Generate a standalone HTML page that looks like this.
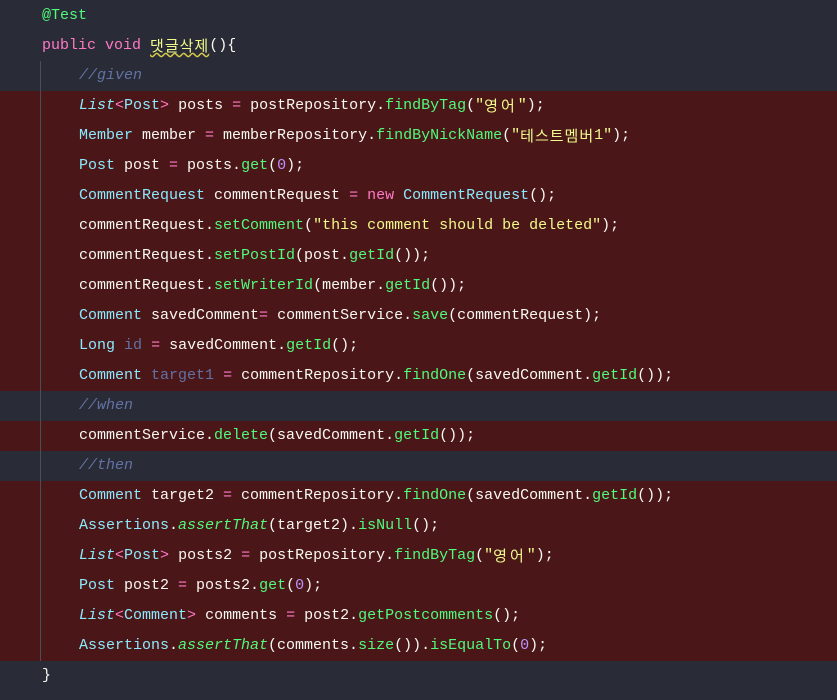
<!DOCTYPE html>
<html><head><meta charset="utf-8"><style>
body{margin:0;background:#292b37;width:837px;height:700px;overflow:hidden;position:relative;font-family:"Liberation Mono","Noto Sans CJK KR",monospace;font-size:15px;color:#f8f8f2}
.band{position:absolute;left:0;width:837px;background:#4a1618}
.guide{position:absolute;left:40px;top:61px;height:600px;width:1px;background:#4b4d5a}
.l{position:absolute;height:30px;line-height:30px;white-space:pre;overflow:visible}
.k{font-family:"Noto Sans CJK KR",sans-serif;letter-spacing:1px;display:inline-block;line-height:15px;vertical-align:-2px}
.k3{letter-spacing:3px}
.kw{color:#ff79c6}.t{color:#8be9fd}.ti{color:#8be9fd;font-style:italic}.m{color:#50fa7b}.mi{color:#50fa7b;font-style:italic}
.s{color:#f1fa8c}.c{color:#6272a4;font-style:italic}.n{color:#bd93f9}.u{color:#6272a4}.a{color:#50fa7b}.op{color:#ff79c6}
.wave{text-decoration:underline wavy #d8c94a;color:#f1fa8c;letter-spacing:1px}
</style></head><body>
<div class="band" style="top:91px;height:300px"></div>
<div class="band" style="top:421px;height:30px"></div>
<div class="band" style="top:481px;height:180px"></div>
<div class="guide"></div>
<div class="l" style="top:1px;left:42px"><span class="a">@Test</span></div>
<div class="l" style="top:31px;left:42px"><span class="kw">public void </span><span class="k wave">댓글삭제</span>(){</div>
<div class="l" style="top:61px;left:79px"><span class="c">//given</span></div>
<div class="l" style="top:91px;left:79px"><span class="ti">List</span><span class="op">&lt;</span><span class="t">Post</span><span class="op">&gt;</span> posts <span class="op">=</span> postRepository.<span class="m">findByTag</span>(<span class="s">"<span class="k k3">영어</span>"</span>);</div>
<div class="l" style="top:121px;left:79px"><span class="t">Member</span> member <span class="op">=</span> memberRepository.<span class="m">findByNickName</span>(<span class="s">"<span class="k">테스트멤버</span>1"</span>);</div>
<div class="l" style="top:151px;left:79px"><span class="t">Post</span> post <span class="op">=</span> posts.<span class="m">get</span>(<span class="n">0</span>);</div>
<div class="l" style="top:181px;left:79px"><span class="t">CommentRequest</span> commentRequest <span class="op">=</span> <span class="kw">new</span> <span class="t">CommentRequest</span>();</div>
<div class="l" style="top:211px;left:79px">commentRequest.<span class="m">setComment</span>(<span class="s">"this comment should be deleted"</span>);</div>
<div class="l" style="top:241px;left:79px">commentRequest.<span class="m">setPostId</span>(post.<span class="m">getId</span>());</div>
<div class="l" style="top:271px;left:79px">commentRequest.<span class="m">setWriterId</span>(member.<span class="m">getId</span>());</div>
<div class="l" style="top:301px;left:79px"><span class="t">Comment</span> savedComment<span class="op">=</span> commentService.<span class="m">save</span>(commentRequest);</div>
<div class="l" style="top:331px;left:79px"><span class="t">Long</span> <span class="u">id</span> <span class="op">=</span> savedComment.<span class="m">getId</span>();</div>
<div class="l" style="top:361px;left:79px"><span class="t">Comment</span> <span class="u">target1</span> <span class="op">=</span> commentRepository.<span class="m">findOne</span>(savedComment.<span class="m">getId</span>());</div>
<div class="l" style="top:391px;left:79px"><span class="c">//when</span></div>
<div class="l" style="top:421px;left:79px">commentService.<span class="m">delete</span>(savedComment.<span class="m">getId</span>());</div>
<div class="l" style="top:451px;left:79px"><span class="c">//then</span></div>
<div class="l" style="top:481px;left:79px"><span class="t">Comment</span> target2 <span class="op">=</span> commentRepository.<span class="m">findOne</span>(savedComment.<span class="m">getId</span>());</div>
<div class="l" style="top:511px;left:79px"><span class="t">Assertions</span>.<span class="mi">assertThat</span>(target2).<span class="m">isNull</span>();</div>
<div class="l" style="top:541px;left:79px"><span class="ti">List</span><span class="op">&lt;</span><span class="t">Post</span><span class="op">&gt;</span> posts2 <span class="op">=</span> postRepository.<span class="m">findByTag</span>(<span class="s">"<span class="k k3">영어</span>"</span>);</div>
<div class="l" style="top:571px;left:79px"><span class="t">Post</span> post2 <span class="op">=</span> posts2.<span class="m">get</span>(<span class="n">0</span>);</div>
<div class="l" style="top:601px;left:79px"><span class="ti">List</span><span class="op">&lt;</span><span class="t">Comment</span><span class="op">&gt;</span> comments <span class="op">=</span> post2.<span class="m">getPostcomments</span>();</div>
<div class="l" style="top:631px;left:79px"><span class="t">Assertions</span>.<span class="mi">assertThat</span>(comments.<span class="m">size</span>()).<span class="m">isEqualTo</span>(<span class="n">0</span>);</div>
<div class="l" style="top:661px;left:42px">}</div>
</body></html>
